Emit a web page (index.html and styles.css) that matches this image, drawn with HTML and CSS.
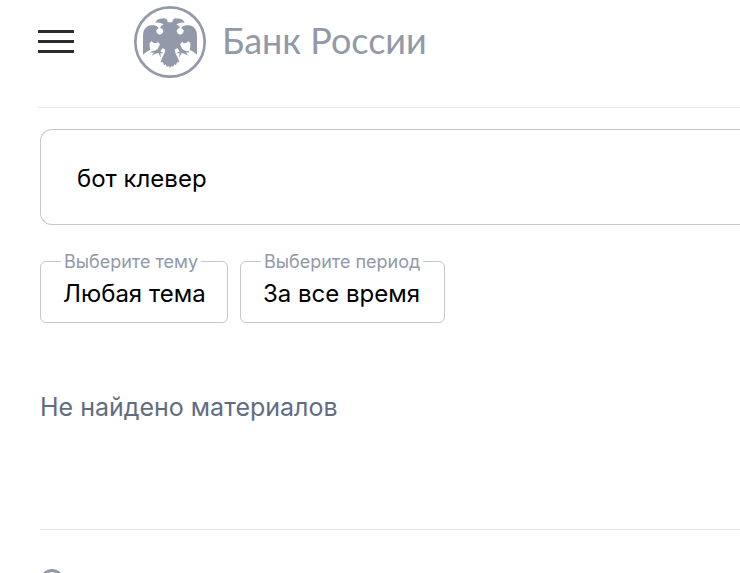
FILE: index.html
```html
<!DOCTYPE html>
<html lang="ru">
<head>
<meta charset="utf-8">
<meta name="viewport" content="width=device-width, initial-scale=1">
<title>Банк России</title>
<link rel="stylesheet" href="styles.css">
</head>
<body>
<header class="header">
  <button class="menu" type="button" aria-label="Меню">
    <svg width="36" height="24" viewBox="0 0 36 24"><path d="M0 1.5h36M0 11.5h36M0 21.5h36" stroke="#2c2b33" stroke-width="3"/></svg>
  </button>
  <a class="logo" href="#">
    <svg class="emblem" width="72" height="72" viewBox="27 18 216 216" aria-hidden="true">
      <circle cx="135" cy="126" r="104" fill="none" stroke="#9299a8" stroke-width="8"/>
      <g id="half" fill="#9299a8">
        <path d="M136 72L133 66L128 67Q128 57 118 55L105 56Q95 57 91 68Q99 66 106 69L116 73Q108 76 105 84L112 86L115 94Q113 103 104 104Q93 101 94 91L101 84Q97 77 86 76Q68 73 59 87Q54 94 54 108V164L65 155L76 149Q72 140 74 130L79 124L86 129L94 130L98 125L105 133L98 147L89 152Q78 152 76 157L87 158L79 168L91 161L100 159L108 174L106 160L116 160L106 154L113 144L121 149Q119 163 111 174L107 187L114 187L117 196L122 193L126 201L131 198L136 204Z"/>
      </g>
      <use href="#half" transform="translate(270 0) scale(-1 1)"/>
    </svg>
    <span class="name">Банк России</span>
  </a>
</header>
<main class="content">
  <input class="search" type="text" value="бот клевер" aria-label="Поиск">
  <div class="filters">
    <fieldset class="filter">
      <legend><label for="theme">Выберите тему</label></legend>
      <select id="theme"><option>Любая тема</option></select>
    </fieldset>
    <fieldset class="filter">
      <legend><label for="period">Выберите период</label></legend>
      <select id="period"><option>За все время</option></select>
    </fieldset>
  </div>
  <p class="result">Не найдено материалов</p>
</main>
<footer class="footer">
  <svg width="24" height="24" viewBox="0 0 24 24" aria-hidden="true"><circle cx="12" cy="12" r="10.5" fill="none" stroke="#9299a8" stroke-width="3"/></svg>
</footer>
</body>
</html>
```
FILE: styles.css
```css
* {
  box-sizing: border-box;
}

html {
  height: 100%;
  overflow: hidden;
}

body {
  margin: 0;
  background: #fff;
  color: #000;
  font-family: Inter, "Liberation Sans", sans-serif;
  font-size: 24px;
}

.header {
  display: flex;
  align-items: center;
  gap: 60px;
  margin-left: 38px;
  padding: 6px 0 29px;
  border-bottom: 1px solid #e6e7e8;
}

.menu {
  display: block;
  padding: 0;
  border: 0;
  background: none;
}

.menu svg,
.emblem {
  display: block;
}

.logo {
  display: flex;
  align-items: center;
  gap: 16px;
  color: #9299a8;
  text-decoration: none;
}

.name {
  padding-bottom: 4px;
  font-family: Lato, "Open Sans", sans-serif;
  font-size: 36px;
  line-height: 44px;
  white-space: nowrap;
}

.content {
  padding: 21px 0 0 40px;
}

.search {
  display: block;
  width: 100%;
  height: 96px;
  padding: 2px 36px 0;
  border: 1px solid #c6c7cb;
  border-right: 0;
  border-radius: 12px 0 0 12px;
  background: #fff;
  color: #000;
  font: inherit;
}

.filters {
  display: flex;
  gap: 12px;
  margin-top: 26px;
}

.filter {
  min-width: 0;
  margin: 0;
  padding: 0 21px 8px 20px;
  border: 1px solid #c6c7cb;
  border-radius: 6px;
}

.filter legend {
  padding: 0 3px;
  color: #9299a8;
  font-size: 18px;
  line-height: 21px;
  white-space: nowrap;
}

.filter select {
  display: block;
  height: 42px;
  margin-left: 2px;
  padding: 0;
  border: 0;
  appearance: none;
  background: none;
  color: #000;
  font: inherit;
}

.result {
  margin: 68px 0 0;
  color: #626c80;
  font-size: 25px;
  line-height: 32px;
}

.footer {
  margin: 106px 0 0 40px;
  padding-top: 39px;
  border-top: 1px solid #e6e7e8;
}

.footer svg {
  display: block;
}
```
